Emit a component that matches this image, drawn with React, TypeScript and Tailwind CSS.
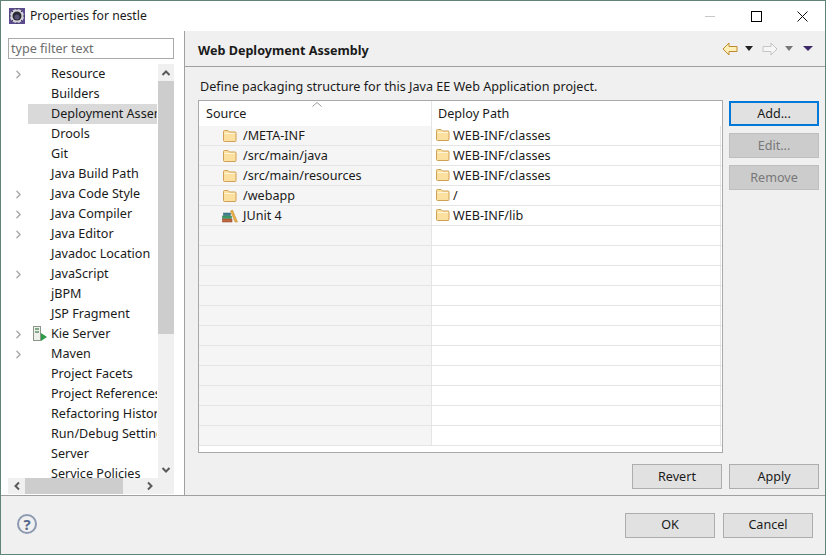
import { ChevronRight } from "lucide-react";

const font = { fontFamily: '"Noto Sans", "Noto Sans CJK SC", sans-serif' };

const treeItems = [
  { label: "Resource", arrow: true },
  { label: "Builders" },
  { label: "Deployment Assembly", selected: true },
  { label: "Drools" },
  { label: "Git" },
  { label: "Java Build Path" },
  { label: "Java Code Style", arrow: true },
  { label: "Java Compiler", arrow: true },
  { label: "Java Editor", arrow: true },
  { label: "Javadoc Location" },
  { label: "JavaScript", arrow: true },
  { label: "jBPM" },
  { label: "JSP Fragment" },
  { label: "Kie Server", arrow: true, kie: true },
  { label: "Maven", arrow: true },
  { label: "Project Facets" },
  { label: "Project References" },
  { label: "Refactoring History" },
  { label: "Run/Debug Settings" },
  { label: "Server" },
  { label: "Service Policies" },
];

const rows = [
  { source: "/META-INF", path: "WEB-INF/classes" },
  { source: "/src/main/java", path: "WEB-INF/classes" },
  { source: "/src/main/resources", path: "WEB-INF/classes" },
  { source: "/webapp", path: "/" },
  { source: "JUnit 4", path: "WEB-INF/lib", lib: true },
];

function FolderIcon({ className = "" }: { className?: string }) {
  return (
    <svg width="16" height="16" viewBox="0 0 16 16" className={`shrink-0 ${className}`}>
      <path d="M1.500 12.500v-9a1 1 0 0 1 1-1h3.500l1.500 1.500h5.500a1 1 0 0 1 1 1v7.500a1 1 0 0 1-1 1h-10.500a1 1 0 0 1-1-1z" fill="#fbe0a0" stroke="#cfa157" />
      <path d="M2.500 5.500h10.500" stroke="#fff4d6" />
    </svg>
  );
}

function LibIcon() {
  return (
    <svg width="16" height="16" viewBox="0 0 16 16" className="shrink-0">
      <rect x="1.500" y="5" width="7" height="2.500" fill="#3c7f8f" stroke="#2f5f6f" strokeWidth="0.500" />
      <rect x="0.500" y="8" width="9" height="2.500" fill="#3f9f6a" stroke="#2f6f4a" strokeWidth="0.500" />
      <rect x="0.500" y="11" width="9.500" height="3" fill="#c0653c" stroke="#8a4526" strokeWidth="0.500" />
      <path d="M10.500 2l5 12h-2.500L8.500 3z" fill="#eeb04a" stroke="#b8842a" strokeWidth="0.500" />
    </svg>
  );
}

function KieIcon() {
  return (
    <svg width="18" height="18" viewBox="0 0 18 18">
      <rect x="2.500" y="1.500" width="7" height="14" fill="#eef1ea" stroke="#8a9686" />
      <path d="M4 4h4M4 7h4" stroke="#5f8f6a" strokeWidth="1.500" />
      <path d="M10 8l6 4-6 4z" fill="#2f9a4a" />
    </svg>
  );
}

function EclipseIcon() {
  return (
    <svg width="18" height="16" viewBox="0 0 18 16">
      <rect x="1" y="0" width="16" height="16" fill="#5b4a8c" />
      <circle cx="9" cy="8" r="7" fill="#d2d2d8" />
      <circle cx="9" cy="8" r="4.500" fill="#2a2833" />
      <circle cx="9" cy="9" r="2.500" fill="#5a5478" />
      <path d="M9 0v2M9 14v2M1 8h2M15 8h2M3.500 2.500l1.500 1.500M13 12l1.500 1.500M14.500 2.500L13 4M3.500 13.500L5 12" stroke="#3a3550" />
    </svg>
  );
}

function NavArrow({ dir, active }: { dir: "left" | "right"; active?: boolean }) {
  return (
    <svg width="16" height="14" viewBox="0 0 16 14" className={dir === "right" ? "-scale-x-100" : ""}>
      <path
        d="M1 7l6-6v3.500h8v5H7V13z"
        fill={active ? "#fff0b8" : "#f6f6f6"}
        stroke={active ? "#c08a30" : "#c4c4c4"}
      />
    </svg>
  );
}

function Caret({ color, wide }: { color: string; wide?: boolean }) {
  return (
    <svg width={wide ? 10 : 8} height="5" viewBox="0 0 8 5" preserveAspectRatio="none">
      <path d="M0 0h8L4 5z" fill={color} />
    </svg>
  );
}

function Btn({ label, focus, off }: { label: string; focus?: boolean; off?: boolean }) {
  return (
    <div
      className={`w-[90px] h-[25px] pt-px flex items-center justify-center text-[12.6px] ${
        focus ? "border-2 border-[#0078d7]" : "border border-[#adadad]"
      } ${off ? "bg-[#cccccc] text-[#787878] border-[#bfbfbf]" : "bg-[#e1e1e1] text-[#1a1a1a]"}`}
    >
      {label}
    </div>
  );
}

function ScrollChevron({ d }: { d: string }) {
  return (
    <svg width="10" height="10" viewBox="0 0 10 10">
      <path d={d} fill="none" stroke="#5a5a5a" strokeWidth="2" />
    </svg>
  );
}

export default function App() {
  return (
    <div style={font} className="w-[826px] h-[555px] overflow-hidden flex flex-col bg-white border border-[#5f8279] text-[12.6px] text-[#1a1a1a]">
      {/* title bar */}
      <div className="h-[30px] shrink-0 flex items-center bg-white">
        <div className="ml-[7px]">
          <EclipseIcon />
        </div>
        <span className="ml-[4px] pt-px text-[12.2px]">Properties for nestle</span>
        <div className="ml-auto flex items-center">
          <div className="w-[46px] flex justify-center">
            <div className="w-[10px] h-px bg-[#c8c8c8]" />
          </div>
          <div className="w-[46px] flex justify-center">
            <div className="w-[11px] h-[11px] border border-black" />
          </div>
          <div className="w-[46px] flex justify-center">
            <svg width="11" height="11" viewBox="0 0 11 11">
              <path d="M0.500 0.500l10 10M10.500 0.500l-10 10" stroke="#111" />
            </svg>
          </div>
        </div>
      </div>

      <div className="h-[465px] shrink-0 flex border-b border-[#a0a0a0]">
        {/* left pane */}
        <div className="w-[184px] shrink-0 bg-white border-r border-[#a0a0a0] pl-[7px] pr-[10px] pt-[7px] flex flex-col">
          <div className="h-[21px] border border-[#a9a9a9] pl-[2px] pt-px flex items-center text-[#6d6d6d]">type filter text</div>
          <div className="mt-[5px] flex h-[414px] w-[166px]">
            <div className="w-[150px] h-[414px] overflow-hidden pr-px">
              {treeItems.map((it) => (
                <div key={it.label} className="h-[20px] flex items-center">
                  <div className="w-[20px] shrink-0 flex justify-center">
                    {it.arrow && <ChevronRight size={13} strokeWidth={2.500} className="text-[#a6a6a6]" />}
                  </div>
                  <div className={`relative flex-1 h-[20px] flex items-center overflow-hidden whitespace-nowrap pl-[23px] ${it.selected ? "bg-[#d9d9d9]" : ""}`}>
                    {it.kie && (
                      <div className="absolute left-[3px] top-[1px]">
                        <KieIcon />
                      </div>
                    )}
                    {it.label}
                  </div>
                </div>
              ))}
            </div>
            <div className="w-[16px] flex flex-col bg-[#f0f0f0]">
              <div className="h-[17px] flex items-center justify-center">
                <ScrollChevron d="M1.500 7L5 3.500 8.500 7" />
              </div>
              <div className="h-[253px] bg-[#cdcdcd]" />
              <div className="flex-1" />
              <div className="h-[17px] flex items-center justify-center">
                <ScrollChevron d="M1.500 3L5 6.500 8.500 3" />
              </div>
            </div>
          </div>
          <div className="h-[16px] w-[166px] flex items-center bg-[#f0f0f0]">
            <div className="w-[17px] flex justify-center">
              <ScrollChevron d="M7 1.500L3.500 5 7 8.500" />
            </div>
            <div className="w-[98px] h-[16px] bg-[#cdcdcd]" />
            <div className="w-[18px]" />
            <div className="w-[17px] flex justify-center">
              <ScrollChevron d="M3 1.500L6.500 5 3 8.500" />
            </div>
          </div>
        </div>

        {/* right pane */}
        <div className="flex-1 bg-[#f0f0f0] flex flex-col">
          <div className="h-[36px] shrink-0 flex items-center border-b border-[#a0a0a0] pl-[13px] pr-[12px]">
            <span className="font-bold pt-[5px]">Web Deployment Assembly</span>
            <div className="ml-auto flex items-center">
              <NavArrow dir="left" active />
              <div className="ml-[7px]">
                <Caret color="#222" />
              </div>
              <div className="ml-[9px]">
                <NavArrow dir="right" />
              </div>
              <div className="ml-[7px]">
                <Caret color="#777" />
              </div>
              <div className="ml-[10px]">
                <Caret color="#3d2a6b" wide />
              </div>
            </div>
          </div>

          <div className="pl-[15px] pt-[10px] h-[33px] shrink-0 leading-[20px]">Define packaging structure for this Java EE Web Application project.</div>

          <div className="flex pl-[13px] items-start">
            <div className="w-[525px] h-[353px] border border-[#a9a9a9] bg-white overflow-hidden">
              <div className="h-[25px] flex relative">
                <div className="w-[233px] border-r border-[#e5e5e5] pl-[7px] pt-[2px] flex items-center">Source</div>
                <div className="pl-[6px] pt-[2px] flex items-center">Deploy Path</div>
                <svg width="10" height="5" viewBox="0 0 10 5" className="absolute left-[113px] top-[1px]">
                  <path d="M0.500 4.500L5 0.500l4.500 4" fill="none" stroke="#999" />
                </svg>
              </div>
              {Array.from({ length: 16 }).map((_, i) => {
                const row = rows[i];
                return (
                  <div key={i} className="h-[20px] flex border-b border-[#e5e5e5]">
                    <div className="w-[233px] bg-[#f5f5f5] border-r border-[#e5e5e5] flex items-center pl-[23px] gap-[5px]">
                      {row && (row.lib ? <LibIcon /> : <FolderIcon />)}
                      {row && <span className="pt-[2px]">{row.source}</span>}
                    </div>
                    <div className="flex-1 mr-px border-r border-[#e5e5e5] flex items-center pl-[3px] gap-[2px]">
                      {row && <FolderIcon className="-translate-y-px" />}
                      {row && <span className="pt-[2px]">{row.path}</span>}
                    </div>
                  </div>
                );
              })}
            </div>
            <div className="ml-[6px] mt-px flex flex-col gap-[7px]">
              <Btn label="Add..." focus />
              <Btn label="Edit..." off />
              <Btn label="Remove" off />
            </div>
          </div>

          <div className="flex justify-end gap-[7px] pr-[6px] mt-[11px]">
            <Btn label="Revert" />
            <Btn label="Apply" />
          </div>
        </div>
      </div>

      {/* footer */}
      <div className="flex-1 bg-[#f0f0f0] flex items-center pl-[16px] pr-[12px]">
        <div className="w-[20px] h-[20px] -translate-y-px rounded-full border-2 border-[#8c99b0] flex items-center justify-center font-bold text-[15px] text-[#56698a]">?</div>
        <div className="ml-auto flex gap-[8px]">
          <Btn label="OK" />
          <Btn label="Cancel" />
        </div>
      </div>
    </div>
  );
}
